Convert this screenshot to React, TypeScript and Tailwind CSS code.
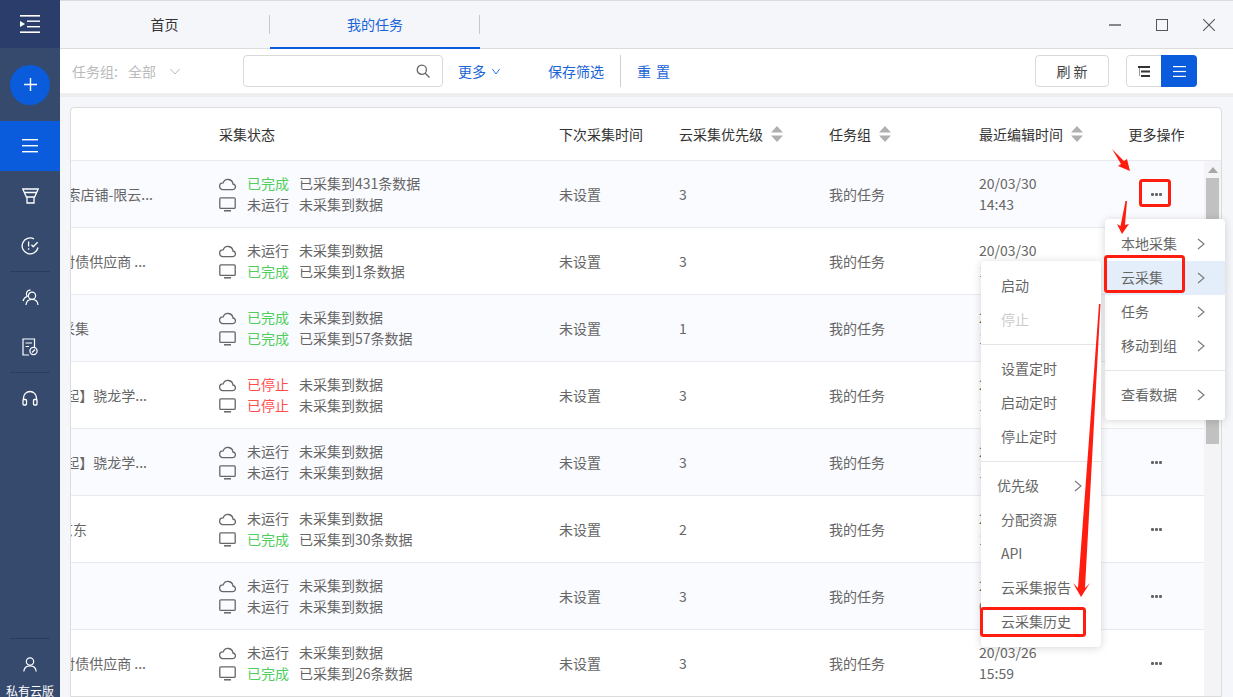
import { FC, ReactNode } from "react";

type Status = "done" | "idle" | "stop";

interface TaskRow {
  name: string;
  nameClass: string;
  cloud: [Status, string];
  local: [Status, string];
  priority: string;
  date: string;
  time: string;
}

const NONE = "未采集到数据";

const rows: TaskRow[] = [
  { name: "搜索店铺-限云...", nameClass: "pr-[66px]", cloud: ["done", "已采集到431条数据"], local: ["idle", NONE], priority: "3", date: "20/03/30", time: "14:43" },
  { name: "应付债供应商 ...", nameClass: "pr-[73px]", cloud: ["idle", NONE], local: ["done", "已采集到1条数据"], priority: "3", date: "20/03/30", time: "14:40" },
  { name: "云采集", nameClass: "pr-[130px]", cloud: ["done", NONE], local: ["done", "已采集到57条数据"], priority: "1", date: "20/03/30", time: "11:20" },
  { name: "【超起】骁龙学...", nameClass: "pr-[72px]", cloud: ["stop", NONE], local: ["stop", NONE], priority: "3", date: "20/03/29", time: "18:02" },
  { name: "【超起】骁龙学...", nameClass: "pr-[72px]", cloud: ["idle", NONE], local: ["idle", NONE], priority: "3", date: "20/03/29", time: "17:45" },
  { name: "京东", nameClass: "pr-[132px]", cloud: ["idle", NONE], local: ["done", "已采集到30条数据"], priority: "2", date: "20/03/28", time: "10:12" },
  { name: "", nameClass: "", cloud: ["idle", NONE], local: ["idle", NONE], priority: "3", date: "20/03/27", time: "09:36" },
  { name: "应付债供应商 ...", nameClass: "pr-[73px]", cloud: ["idle", NONE], local: ["done", "已采集到26条数据"], priority: "3", date: "20/03/26", time: "15:59" },
];

const statusMap: Record<Status, { label: string; className: string }> = {
  done: { label: "已完成", className: "text-[#4fce5d]" },
  idle: { label: "未运行", className: "text-[#666666]" },
  stop: { label: "已停止", className: "text-[#ff4d4f]" },
};

const CloudIcon = () => (
  <svg width="17" height="14" viewBox="0 0 17 14" fill="none" stroke="#666" strokeWidth="1.3" className="shrink-0">
    <path d="M3.8 12.6h9.6a2.8 2.8 0 0 0 .5-5.6 5 5 0 0 0-9.7-1.2 3.4 3.4 0 0 0-.4 6.8z" />
  </svg>
);

const MonitorIcon = () => (
  <svg width="17" height="15" viewBox="0 0 17 15" fill="none" stroke="#666" strokeWidth="1.3" className="shrink-0">
    <rect x="0.8" y="0.8" width="15.4" height="10.6" rx="1" />
    <path d="M5 13.8h7" strokeWidth="1.5" />
  </svg>
);

const Chevron: FC<{ className?: string }> = ({ className }) => (
  <svg width="8" height="12" viewBox="0 0 8 12" fill="none" stroke="#777" strokeWidth="1.1" className={className}>
    <path d="M1 1l6 5-6 5" />
  </svg>
);

const ChevronDown: FC<{ color: string; w: number }> = ({ color, w }) => (
  <svg width={w} height="7" viewBox="0 0 10 7" fill="none" stroke={color} strokeWidth="1" preserveAspectRatio="none">
    <path d="M.5 1L5 6l4.5-5" />
  </svg>
);

const SortIcon = () => (
  <svg width="12" height="16" viewBox="0 0 12 16" fill="#b0b0b0" className="ml-2 shrink-0">
    <path d="M6 0l6 6.5H0zM6 16L0 9.5h12z" />
  </svg>
);

const Dots = () => (
  <div className="flex gap-px">
    <span className="w-[3px] h-[3px] rounded-[1px] bg-[#666]" />
    <span className="w-[3px] h-[3px] rounded-[1px] bg-[#666]" />
    <span className="w-[3px] h-[3px] rounded-[1px] bg-[#666]" />
  </div>
);

const StatusLine: FC<{ icon: ReactNode; value: [Status, string] }> = ({ icon, value }) => {
  const s = statusMap[value[0]];
  return (
    <div className="flex items-center h-[21px]">
      <div className="w-[17px] flex justify-center">{icon}</div>
      <span className={"ml-[11px] w-[52px] " + s.className}>{s.label}</span>
      <span className="text-[#666666]">{value[1]}</span>
    </div>
  );
};

const Sidebar = () => (
  <aside className="w-[60px] shrink-0 h-full bg-[#364a6e] flex flex-col items-stretch text-white">
    <div className="h-12 shrink-0 bg-[#2b3e6b] flex items-center justify-center">
      <svg width="20" height="18" viewBox="0 0 20 18" fill="white">
        <rect x="0" y="0" width="20" height="1.6" />
        <rect x="7" y="5.5" width="13" height="1.4" />
        <rect x="7" y="11" width="13" height="1.4" />
        <rect x="0" y="16.4" width="20" height="1.6" />
        <path d="M0 6l5 3-5 3z" />
      </svg>
    </div>
    <div className="h-[73px] shrink-0 flex items-center justify-center">
      <div className="w-10 h-10 rounded-full bg-[#0b5cdc] flex items-center justify-center">
        <svg width="13" height="13" viewBox="0 0 13 13" stroke="white" strokeWidth="1.4">
          <path d="M6.5 0v13M0 6.5h13" />
        </svg>
      </div>
    </div>
    <div className="h-[50px] shrink-0 bg-[#0b5cdc] flex items-center justify-center">
      <svg width="16" height="14" viewBox="0 0 16 14" fill="white">
        <rect y="0" width="16" height="1.4" />
        <rect y="6" width="16" height="1.4" />
        <rect y="12" width="16" height="1.4" />
      </svg>
    </div>
    <div className="h-[50px] shrink-0 flex items-center justify-center">
      <svg width="17" height="16" viewBox="0 0 17 16" fill="none" stroke="white" strokeWidth="1.3">
        <path d="M.8 1h15.4l-3.6 8H4.4z" />
        <path d="M2.5 4.5h12M5 9v6h7V9" />
      </svg>
    </div>
    <div className="h-[50px] shrink-0 flex items-center justify-center">
      <svg width="18" height="18" viewBox="0 0 18 18" fill="none" stroke="white" strokeWidth="1.3">
        <path d="M13 1.9A8 8 0 1 0 17 10.5" />
        <path d="M7.6 4.5v5M7.6 11.2v1.6" />
        <path d="M10.5 7.8l1.7 1.9 4.4-4.5" />
      </svg>
    </div>
    <div className="h-px shrink-0 mx-[10px] bg-[#2b3d5f]" />
    <div className="h-[50px] shrink-0 flex items-center justify-center">
      <svg width="17" height="17" viewBox="0 0 17 17" fill="none" stroke="white" strokeWidth="1.2">
        <circle cx="10" cy="6.8" r="3.6" />
        <path d="M4 16c.3-3.4 2.6-5.6 6-5.6s5.7 2.2 6 5.6" />
        <path d="M8.5 1.2A3.6 3.6 0 0 0 4.4 4.7c0 1 .4 1.9 1 2.5C3 8 1.5 9.8 1 12" />
      </svg>
    </div>
    <div className="h-[50px] shrink-0 flex items-center justify-center">
      <svg width="16" height="18" viewBox="0 0 16 18" fill="none" stroke="white" strokeWidth="1.2">
        <path d="M7 17H1V1h11.5v8" />
        <path d="M3.5 5H10M3.5 8.5H7" />
        <circle cx="11.5" cy="13" r="3.6" />
        <path d="M10 14.5l3-3" />
      </svg>
    </div>
    <div className="h-px shrink-0 mx-[10px] bg-[#2b3d5f]" />
    <div className="h-[50px] shrink-0 flex items-center justify-center">
      <svg width="16" height="16" viewBox="0 0 16 16" fill="none" stroke="white" strokeWidth="1.3">
        <path d="M1.5 10V8a6.5 6.5 0 0 1 13 0v2" />
        <rect x="1" y="9.5" width="3.5" height="5.5" rx="1" />
        <rect x="11.5" y="9.5" width="3.5" height="5.5" rx="1" />
      </svg>
    </div>
    <div className="flex-1" />
    <div className="h-px shrink-0 mx-[10px] bg-[#2b3d5f]" />
    <div className="h-[58px] shrink-0 flex flex-col items-center pt-[18px]">
      <svg width="14" height="15" viewBox="0 0 14 15" fill="none" stroke="white" strokeWidth="1.2" className="shrink-0">
        <circle cx="7" cy="4.5" r="3.7" />
        <path d="M.8 14.5c.3-3.5 2.8-5.7 6.2-5.7s5.9 2.2 6.2 5.7" />
      </svg>
      <span className="mt-[10px] text-[12px] leading-[18px] whitespace-nowrap">私有云版</span>
    </div>
  </aside>
);

const TopBar = () => (
  <div className="h-[49px] shrink-0 border-t border-b border-[#dcdcdc] bg-[#f5f6fa] flex items-center">
    <div className="w-[209px] h-full flex items-center justify-center text-[#333]">首页</div>
    <div className="w-px h-[19px] bg-[#c8c8c8]" />
    <div className="w-[210px] h-full flex items-center justify-center text-[#1a64d8] border-b-2 border-[#0b5cdc] -mb-px">
      我的任务
    </div>
    <div className="w-px h-[19px] -ml-px bg-[#c8c8c8]" />
    <div className="flex-1" />
    <div className="flex items-center gap-[35px] pr-[18px]">
      <div className="w-3 h-[2px] bg-[#888]" />
      <div className="w-3 h-3 border border-[#555]" />
      <svg width="12" height="12" viewBox="0 0 12 12" stroke="#555" strokeWidth="1.1">
        <path d="M0 0l12 12M12 0L0 12" />
      </svg>
    </div>
  </div>
);

const ToolBar = () => (
  <div className="h-11 shrink-0 bg-white flex items-center">
    <span className="ml-3 text-[#bbbbbb]">任务组:</span>
    <span className="ml-[10px] text-[#bbbbbb]">全部</span>
    <div className="ml-[14px]">
      <ChevronDown color="#bbbbbb" w={10} />
    </div>
    <div className="ml-[63px] w-[200px] h-8 border border-[#d9d9d9] rounded flex items-center justify-end pr-[12px]">
      <svg width="14" height="14" viewBox="0 0 14 14" fill="none" stroke="#666" strokeWidth="1.3">
        <circle cx="5.8" cy="5.8" r="4.6" />
        <path d="M9.2 9.2l4.3 4.3" />
      </svg>
    </div>
    <span className="ml-[15px] text-[#1a64d8]">更多</span>
    <div className="ml-[6px]">
      <ChevronDown color="#1a64d8" w={8} />
    </div>
    <span className="ml-[48px] text-[#1a64d8]">保存筛选</span>
    <div className="ml-[16px] w-px h-8 bg-[#d0d0d0]" />
    <span className="ml-[16px] text-[#1a64d8] whitespace-pre tracking-[1px]">重 置</span>
    <div className="flex-1" />
    <div className="w-[74px] h-8 border border-[#d9d9d9] rounded flex items-center justify-center text-[#444] whitespace-pre">
      刷 新
    </div>
    <div className="ml-[17px] mr-9 w-[71px] h-8 flex rounded overflow-hidden">
      <div className="w-[35px] border border-r-0 border-[#d9d9d9] rounded-l flex items-center justify-center">
        <svg width="12" height="11" viewBox="0 0 12 11" fill="#333">
          <rect width="12" height="2" />
          <rect x="3" y="4.5" width="9" height="2" />
          <rect x="3" y="9" width="9" height="2" />
          <rect x="1" y="2" width="1" height="8" fill="#999" />
        </svg>
      </div>
      <div className="flex-1 bg-[#0b5cdc] flex items-center justify-center">
        <svg width="13" height="11" viewBox="0 0 13 11" fill="white">
          <rect width="13" height="1.2" />
          <rect y="4.9" width="13" height="1.2" />
          <rect y="9.8" width="13" height="1.2" />
        </svg>
      </div>
    </div>
  </div>
);

const TableHeader = () => (
  <div className="h-[53px] shrink-0 flex items-center border-b border-[#e8eaf2] text-[#333]">
    <div className="w-[148px]" />
    <div className="w-[340px]">采集状态</div>
    <div className="w-[120px]">下次采集时间</div>
    <div className="w-[150px] flex items-center">云采集优先级<SortIcon /></div>
    <div className="w-[150px] flex items-center">任务组<SortIcon /></div>
    <div className="w-[130px] flex items-center">最近编辑时间<SortIcon /></div>
    <div className="w-[95px] text-center">更多操作</div>
  </div>
);

const TableRow: FC<{ row: TaskRow; tinted: boolean }> = ({ row, tinted }) => (
  <div className={"h-[67px] shrink-0 flex items-center border-b border-[#e8eaf2] text-[#666666] " + (tinted ? "bg-[#fafbff]" : "bg-white")}>
    <div className="w-[148px] overflow-hidden">
      <div className={"flex justify-end whitespace-nowrap " + row.nameClass}>{row.name}</div>
    </div>
    <div className="w-[340px]">
      <StatusLine icon={<CloudIcon />} value={row.cloud} />
      <StatusLine icon={<MonitorIcon />} value={row.local} />
    </div>
    <div className="w-[120px]">未设置</div>
    <div className="w-[150px]">{row.priority}</div>
    <div className="w-[150px]">我的任务</div>
    <div className="w-[130px] leading-[21px]">
      <div>{row.date}</div>
      <div>{row.time}</div>
    </div>
    <div className="w-[95px] flex justify-center"><Dots /></div>
  </div>
);

const Scrollbar = () => (
  <div className="w-[17px] shrink-0 bg-[#f4f4f6] flex flex-col items-center">
    <svg width="10" height="6" viewBox="0 0 10 6" fill="#a8a8a8" className="mt-[6px] shrink-0">
      <path d="M5 0l5 6H0z" />
    </svg>
    <div className="mt-[5px] w-[13px] h-[266px] bg-[#c1c1c1]" />
  </div>
);

const MenuItem: FC<{ label: string; arrow?: boolean; active?: boolean; disabled?: boolean; className?: string; arrowClass?: string }> = ({
  label,
  arrow,
  active,
  disabled,
  className = "pl-4",
  arrowClass = "right-[20px]",
}) => (
  <div className={"h-[34px] relative flex items-center pb-[2px] " + className + " " + (active ? "bg-[#e4eefb] " : "") + (disabled ? "text-[#cccccc]" : "text-[#666666]")}>
    {label}
    {arrow && <Chevron className={"absolute mt-[2px] " + arrowClass} />}
  </div>
);

const Divider = () => <div className="h-px bg-[#e5e5e8]" />;

const MainMenu = () => (
  <div className="absolute left-[1105px] top-[219px] w-[120px] h-[201px] bg-white rounded shadow-[0_1px_8px_rgba(0,0,0,0.16)] pt-2 z-20">
    <MenuItem label="本地采集" arrow />
    <MenuItem label="云采集" arrow active />
    <MenuItem label="任务" arrow />
    <MenuItem label="移动到组" arrow />
    <div className="h-[7px]" />
    <Divider />
    <div className="h-[7px]" />
    <MenuItem label="查看数据" arrow />
  </div>
);

const SubMenu = () => (
  <div className="absolute left-[981px] top-[261px] w-[120px] h-[386px] bg-white rounded shadow-[0_1px_8px_rgba(0,0,0,0.16)] pt-2 z-20">
    <MenuItem label="启动" className="pl-5" />
    <MenuItem label="停止" className="pl-5" disabled />
    <div className="h-[7px]" />
    <Divider />
    <div className="h-[7px]" />
    <MenuItem label="设置定时" className="pl-5" />
    <MenuItem label="启动定时" className="pl-5" />
    <MenuItem label="停止定时" className="pl-5" />
    <div className="h-[7px]" />
    <Divider />
    <div className="h-[7px]" />
    <MenuItem label="优先级" className="pl-4" arrow arrowClass="right-[19px]" />
    <MenuItem label="分配资源" className="pl-5" />
    <MenuItem label="API" className="pl-5" />
    <MenuItem label="云采集报告" className="pl-5" />
    <MenuItem label="云采集历史" className="pl-5" />
  </div>
);

const Annotations = () => (
  <svg width="1233" height="697" viewBox="0 0 1233 697" fill="none" className="absolute left-0 top-0 z-30 pointer-events-none">
    <g stroke="#ff1d10" strokeWidth="3">
      <rect x="1140.5" y="180.5" width="29" height="25" rx="2" />
      <rect x="1105.5" y="256.5" width="78" height="35" rx="2" />
      <rect x="981.5" y="608.5" width="103" height="27" rx="2" />
    </g>
    <g fill="#ff1d10">
      <path d="M1112 149L1124 161L1127 159L1130 171L1118 166L1121 164Z" />
      <path d="M1125.5 201L1127 201L1125 225L1129 224L1122 234L1117 224L1120.5 226Z" />
      <path d="M1099 304L1100.5 304L1085 588L1090 583L1081 597L1073 583L1078 588Z" />
    </g>
  </svg>
);

export default function App() {
  return (
    <div className="relative w-full h-screen overflow-hidden flex text-[14px] leading-[21px] bg-[#f5f6fa] font-['Noto_Sans_CJK_SC','Noto_Sans',sans-serif]">
      <Sidebar />
      <main className="flex-1 min-w-0 h-full flex flex-col">
        <TopBar />
        <ToolBar />
        <div className="h-1 shrink-0 bg-[#eeeeee]" />
        <div className="flex-1 min-h-0 pt-[10px] pl-[10px] pr-[11px]">
          <div className="h-full border border-[#dcdcdc] rounded-t bg-white overflow-hidden flex flex-col">
            <TableHeader />
            <div className="flex-1 min-h-0 flex">
              <div className="flex-1 min-w-0 flex flex-col">
                {rows.map((row, i) => (
                  <TableRow key={i} row={row} tinted={i % 2 === 0} />
                ))}
              </div>
              <Scrollbar />
            </div>
          </div>
        </div>
      </main>
      <MainMenu />
      <SubMenu />
      <Annotations />
    </div>
  );
}
